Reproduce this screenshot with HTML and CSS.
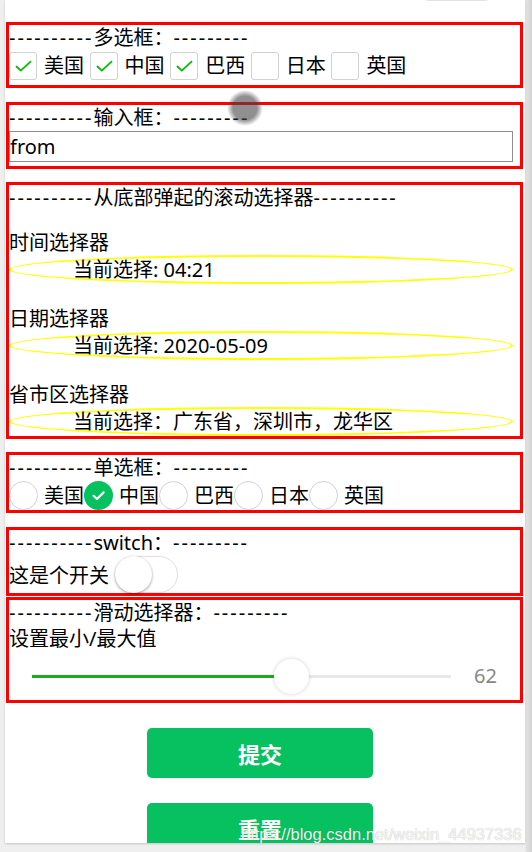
FILE: index.html
```html
<!DOCTYPE html>
<html lang="zh-CN">
<head>
<meta charset="utf-8">
<title>表单组件</title>
<link rel="stylesheet" href="styles.css">
</head>
<body>
<div class="phone">
  <div class="capsule"></div>

  <section class="box box-checkbox">
    <div class="title"><span class="dash">----------</span>多选框：<span class="dash">---------</span></div>
    <div class="cb-row">
      <label class="cb-item"><span class="cb"><svg viewBox="0 0 28 28" width="28" height="28"><path d="M7.5 14.5 L11.8 18.6 L21.5 9.6" fill="none" stroke="#09bb07" stroke-width="1.8" stroke-linecap="round" stroke-linejoin="round"/></svg></span>美国</label>
      <label class="cb-item"><span class="cb"><svg viewBox="0 0 28 28" width="28" height="28"><path d="M7.5 14.5 L11.8 18.6 L21.5 9.6" fill="none" stroke="#09bb07" stroke-width="1.8" stroke-linecap="round" stroke-linejoin="round"/></svg></span>中国</label>
      <label class="cb-item"><span class="cb"><svg viewBox="0 0 28 28" width="28" height="28"><path d="M7.5 14.5 L11.8 18.6 L21.5 9.6" fill="none" stroke="#09bb07" stroke-width="1.8" stroke-linecap="round" stroke-linejoin="round"/></svg></span>巴西</label>
      <label class="cb-item"><span class="cb"></span>日本</label>
      <label class="cb-item"><span class="cb"></span>英国</label>
    </div>
  </section>

  <section class="box box-input">
    <div class="title"><span class="dash">----------</span>输入框：<span class="dash">---------</span></div>
    <input class="text-input" type="text" value="from">
  </section>

  <section class="box box-picker">
    <div class="title"><span class="dash">----------</span>从底部弹起的滚动选择器<span class="dash">----------</span></div>
    <div class="picker picker-first">
      <div class="picker-label">时间选择器</div>
      <div class="ellipse">当前选择: 04:21</div>
    </div>
    <div class="picker">
      <div class="picker-label">日期选择器</div>
      <div class="ellipse">当前选择: 2020-05-09</div>
    </div>
    <div class="picker">
      <div class="picker-label">省市区选择器</div>
      <div class="ellipse">当前选择：广东省，深圳市，龙华区</div>
    </div>
  </section>

  <section class="box box-radio">
    <div class="title"><span class="dash">----------</span>单选框：<span class="dash">---------</span></div>
    <div class="radio-row">
      <label class="radio-item"><span class="radio"></span>美国</label>
      <label class="radio-item"><span class="radio radio-on"><svg viewBox="0 0 29 29" width="29" height="29"><path d="M9.6 14.8 L13 18 L19.6 11.4" fill="none" stroke="#fff" stroke-width="2.2" stroke-linecap="round" stroke-linejoin="round"/></svg></span>中国</label>
      <label class="radio-item"><span class="radio"></span>巴西</label>
      <label class="radio-item"><span class="radio"></span>日本</label>
      <label class="radio-item"><span class="radio"></span>英国</label>
    </div>
  </section>

  <section class="box box-switch">
    <div class="title"><span class="dash">----------</span>switch：<span class="dash">---------</span></div>
    <div class="switch-row">
      <span>这是个开关</span>
      <span class="switch"><span class="switch-knob"></span></span>
    </div>
  </section>

  <section class="box box-slider">
    <div class="title"><span class="dash">----------</span>滑动选择器：<span class="dash">---------</span></div>
    <div class="slider-label">设置最小/最大值</div>
    <div class="slider-row">
      <div class="track">
        <div class="track-fill" style="width:62%"></div>
        <div class="thumb" style="left:62%"></div>
      </div>
      <span class="slider-val">62</span>
    </div>
  </section>

  <div class="btn btn-submit">提交</div>
  <div class="btn btn-reset">重置</div>

  <div class="touch"></div>
  <div class="watermark">https://blog.csdn.net/weixin_44937336</div>
</div>
</body>
</html>
```

FILE: styles.css
```css
html, body {
  margin: 0;
  padding: 0;
}

body {
  width: 532px;
  height: 852px;
  overflow: hidden;
  background: linear-gradient(to right, #efefef 0, #efefef 525px, #e2e2e2 526px, #d2d2d2 532px);
  font-family: "Noto Sans", "Noto Sans CJK SC", sans-serif;
  color: #000;
}

.phone {
  position: relative;
  margin-left: 5px;
  width: 520px;
  height: 843px;
  padding-top: 22px;
  box-sizing: border-box;
  background: #fff;
  overflow: hidden;
  box-shadow: 0 1px 2px rgba(0, 0, 0, 0.18);
}

.capsule {
  position: absolute;
  left: 408px;
  top: -31px;
  width: 87px;
  height: 32px;
  border: 1px solid #e2e2e2;
  border-radius: 16px;
  box-sizing: border-box;
}

.box {
  margin-left: 1px;
  width: 517px;
  box-sizing: border-box;
  border: 3px solid #ff0000;
  font-size: 20px;
}

.title {
  height: 26px;
  line-height: 26px;
  white-space: nowrap;
}

.dash {
  letter-spacing: 2px;
}

/* checkbox */
.cb-row {
  display: flex;
  align-items: center;
  height: 34px;
  padding-bottom: 4px;
  box-sizing: border-box;
}

.cb-item {
  display: flex;
  align-items: center;
  margin-right: 5.6px;
  line-height: 30px;
}

.cb {
  display: block;
  width: 28px;
  height: 28px;
  margin-right: 7px;
  border: 1px solid #d1d1d1;
  border-radius: 3px;
  box-sizing: border-box;
}

.cb svg {
  display: block;
  margin: -1px;
}

/* input */
.box-input {
  margin-top: 14px;
  padding-bottom: 4px;
}

.text-input {
  display: block;
  width: 504px;
  height: 31px;
  margin: 0;
  padding: 0;
  border: 1px solid #8c8c8c;
  box-sizing: border-box;
  font-family: "Noto Sans", "Noto Sans CJK SC", sans-serif;
  font-size: 20px;
  line-height: 29px;
  color: #000;
  background: #fff;
  outline: none;
}

/* pickers */
.box-picker {
  margin-top: 13px;
}

.picker {
  margin-top: 22px;
}

.picker-first {
  margin-top: 19px;
}

.picker-label {
  height: 25px;
  line-height: 25px;
}

.ellipse {
  width: 504px;
  height: 29px;
  border: 2px solid #ffff00;
  border-radius: 50%;
  box-sizing: border-box;
  padding-left: 62px;
  line-height: 25px;
  white-space: nowrap;
}

/* radio */
.box-radio {
  margin-top: 13px;
}

.radio-row {
  display: flex;
  align-items: center;
  height: 29px;
}

.radio-item {
  display: flex;
  align-items: center;
  line-height: 29px;
}

.radio {
  display: block;
  width: 29px;
  height: 29px;
  margin-right: 6px;
  border: 1px solid #d1d1d1;
  border-radius: 50%;
  box-sizing: border-box;
}

.radio-on {
  border: none;
  background: #07c160;
}

.radio-on svg {
  display: block;
}

/* switch */
.box-switch {
  margin-top: 14px;
}

.switch-row {
  display: flex;
  align-items: center;
  height: 37px;
}

.switch {
  display: flex;
  width: 63px;
  height: 37px;
  margin-left: 6px;
  border: 1px solid #dfdfdf;
  border-radius: 19px;
  box-sizing: border-box;
  background: #fff;
}

.switch-knob {
  display: block;
  width: 37px;
  height: 37px;
  margin: -1px 0 0 -1px;
  border-radius: 50%;
  background: #fff;
  box-shadow: 0 1px 3px rgba(0, 0, 0, 0.4);
}

/* slider */
.box-slider {
  margin-top: 1px;
}

.slider-label {
  height: 26px;
  line-height: 26px;
}

.slider-row {
  display: flex;
  align-items: center;
  height: 48px;
  padding-left: 23px;
}

.track {
  position: relative;
  width: 419px;
  height: 3px;
  background: #e9e9e9;
}

.track-fill {
  height: 100%;
  background: #1aad19;
}

.thumb {
  position: absolute;
  top: 50%;
  width: 35px;
  height: 35px;
  margin: -17.5px 0 0 -17.5px;
  border-radius: 50%;
  background: #fff;
  box-shadow: 0 0 4px rgba(0, 0, 0, 0.18);
}

.slider-val {
  margin-left: 23px;
  color: #888;
  font-size: 20px;
  line-height: 26px;
}

/* buttons */
.btn {
  width: 226px;
  height: 50px;
  margin-left: 142px;
  border-radius: 5px;
  background: #07c160;
  color: #fff;
  font-family: "Noto Sans CJK SC", sans-serif;
  font-size: 22px;
  font-weight: bold;
  line-height: 50px;
  text-align: center;
}

.btn-submit {
  margin-top: 25px;
}

.btn-reset {
  margin-top: 25px;
}

/* overlays */
.touch {
  position: absolute;
  left: 222px;
  top: 90px;
  width: 36px;
  height: 36px;
  border-radius: 50%;
  background: radial-gradient(circle, rgba(70, 70, 70, 0.6) 0, rgba(70, 70, 70, 0.6) 12px, rgba(70, 70, 70, 0.3) 15px, rgba(70, 70, 70, 0) 18px);
}

.watermark {
  position: absolute;
  left: 236px;
  top: 825px;
  font-family: "Liberation Sans", Arial, sans-serif;
  font-size: 16.5px;
  line-height: 19px;
  white-space: nowrap;
  color: #f4f4f4;
  text-shadow: 0 0 1px rgba(0, 0, 0, 0.3);
}
```
